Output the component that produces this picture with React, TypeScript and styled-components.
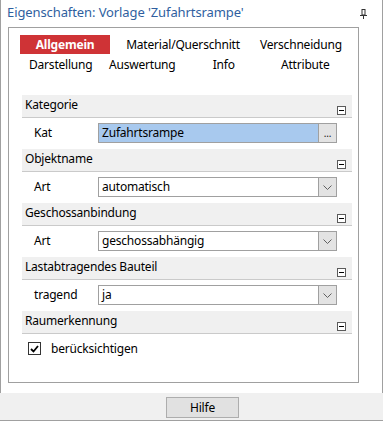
import React from "react";
import styled, { createGlobalStyle } from "styled-components";

const GlobalStyle = createGlobalStyle`
  html, body {
    margin: 0;
    padding: 0;
    background: #ffffff;
  }
  body {
    font-family: "Noto Sans", "Open Sans", sans-serif;
    font-size: 12px;
    letter-spacing: -0.2px;
    color: #000000;
  }
`;

const Window = styled.div`
  width: 383px;
  height: 421px;
  display: flex;
  flex-direction: column;
`;

const Pane = styled.div`
  height: 393px;
  display: flex;
  flex-direction: column;
  border-left: 1px solid #a0a0a0;
  border-right: 1px solid #a0a0a0;
  box-sizing: border-box;
  background: #ffffff;
`;

const TitleBar = styled.div`
  height: 27px;
  display: flex;
  align-items: flex-start;
  justify-content: space-between;
  padding: 3px 15px 0 6px;
  box-sizing: border-box;
`;

const Title = styled.div`
  font-size: 13px;
  letter-spacing: -0.1px;
  line-height: 18px;
  color: #2f5f9f;
  white-space: nowrap;
`;

const Pin = styled.svg`
  margin-top: 6px;
`;

const Panel = styled.div`
  width: 351px;
  height: 356px;
  margin-left: 7px;
  border: 1px solid #a0a0a0;
  box-sizing: border-box;
  padding: 7px 0 0 11px;
`;

const TabRow = styled.div<{ $cols: number; $gap: number }>`
  width: 326px;
  display: grid;
  grid-template-columns: repeat(${(p) => p.$cols}, 1fr);
  column-gap: ${(p) => p.$gap}px;
  height: 19px;
  margin-bottom: 1px;
`;

const Tab = styled.div<{ $active?: boolean }>`
  display: flex;
  align-items: center;
  justify-content: center;
  white-space: nowrap;
  line-height: 19px;
  background: ${(p) => (p.$active ? "#cf3336" : "transparent")};
  color: ${(p) => (p.$active ? "#ffffff" : "#000000")};
  font-weight: ${(p) => (p.$active ? 700 : 400)};
`;

const PropertyGrid = styled.div`
  width: 330px;
  margin: 21px 0 0 2px;
`;

const CategoryHeader = styled.div`
  height: 23px;
  box-sizing: border-box;
  display: flex;
  justify-content: space-between;
  padding: 1px 6px 0 3px;
  background: #f0f0f0;
  border-bottom: 1px solid #cacaca;
`;

const CategoryTitle = styled.span`
  align-self: flex-start;
  line-height: 17px;
`;

const CollapseBox = styled.span`
  align-self: flex-end;
  width: 9px;
  height: 9px;
  margin-bottom: 2px;
  box-sizing: border-box;
  border: 1px solid #5a5a5a;
  background: #ffffff;
  display: flex;
  align-items: center;
  justify-content: center;

  &::after {
    content: "";
    width: 5px;
    height: 1px;
    background: #000000;
  }
`;

const PropRow = styled.div`
  height: 31px;
  box-sizing: border-box;
  padding: 5px 0 0 12px;
  display: flex;
  align-items: flex-start;
`;

const PropLabel = styled.span`
  width: 64px;
  line-height: 20px;
`;

const ValueBox = styled.div<{ $selected?: boolean }>`
  width: 239px;
  height: 20px;
  box-sizing: border-box;
  display: flex;
  border: 1px solid #a0a0a0;
  background: ${(p) => (p.$selected ? "#a8c9ee" : "#ffffff")};
`;

const ValueText = styled.span`
  flex: 1;
  padding-left: 3px;
  line-height: 18px;
  white-space: nowrap;
`;

const ValueButton = styled.span`
  width: 17px;
  border-left: 1px solid #a0a0a0;
  background: #e3e3e3;
  display: flex;
  align-items: center;
  justify-content: center;
  font-size: 10px;
  line-height: 18px;
  color: #202020;
`;

const CheckRow = styled.label`
  display: flex;
  align-items: center;
  gap: 10px;
  padding: 6px 0 0 6px;
`;

const CheckBox = styled.span`
  width: 13px;
  height: 13px;
  box-sizing: border-box;
  border: 1px solid #333333;
  background: #ffffff;
  display: flex;
  align-items: center;
  justify-content: center;
`;

const Footer = styled.div`
  height: 28px;
  box-sizing: border-box;
  background: #f0f0f0;
  border-bottom: 1px solid #a0a0a0;
  padding: 4px 0 0 166px;
`;

const Button = styled.button`
  width: 73px;
  height: 21px;
  box-sizing: border-box;
  border: 1px solid #adadad;
  background: #e1e1e1;
  font-family: inherit;
  font-size: 12px;
  letter-spacing: -0.2px;
  color: #000000;
  padding: 0;
`;

type Category = {
  title: string;
  label?: string;
  value?: string;
  kind: "browse" | "select" | "check";
};

const categories: Category[] = [
  { title: "Kategorie", label: "Kat", value: "Zufahrtsrampe", kind: "browse" },
  { title: "Objektname", label: "Art", value: "automatisch", kind: "select" },
  { title: "Geschossanbindung", label: "Art", value: "geschossabhängig", kind: "select" },
  { title: "Lastabtragendes Bauteil", label: "tragend", value: "ja", kind: "select" },
  { title: "Raumerkennung", value: "berücksichtigen", kind: "check" },
];

const Chevron = () => (
  <svg width="9" height="5" viewBox="0 0 9 5">
    <polyline points="0.5,0.5 4.5,4.5 8.5,0.5" fill="none" stroke="#606060" strokeWidth="1" />
  </svg>
);

const App: React.FC = () => {
  return (
    <Window>
      <GlobalStyle />
      <Pane>
        <TitleBar>
          <Title>Eigenschaften: Vorlage 'Zufahrtsrampe'</Title>
          <Pin width="7" height="10" viewBox="0 0 7 10">
            <rect x="2" y="0.5" width="3" height="5.5" fill="none" stroke="#333" />
            <line x1="0" y1="6.5" x2="7" y2="6.5" stroke="#333" />
            <line x1="3.5" y1="6.5" x2="3.5" y2="10" stroke="#333" />
          </Pin>
        </TitleBar>
        <Panel>
          <TabRow $cols={3} $gap={16}>
            <Tab $active>Allgemein</Tab>
            <Tab>Material/Querschnitt</Tab>
            <Tab>Verschneidung</Tab>
          </TabRow>
          <TabRow $cols={4} $gap={0}>
            <Tab>Darstellung</Tab>
            <Tab>Auswertung</Tab>
            <Tab>Info</Tab>
            <Tab>Attribute</Tab>
          </TabRow>
          <PropertyGrid>
            {categories.map((c) => (
              <React.Fragment key={c.title}>
                <CategoryHeader>
                  <CategoryTitle>{c.title}</CategoryTitle>
                  <CollapseBox />
                </CategoryHeader>
                {c.kind === "check" ? (
                  <CheckRow>
                    <CheckBox>
                      <svg width="9" height="8" viewBox="0 0 9 8">
                        <polyline points="1,4 3.5,6.5 8,1" fill="none" stroke="#000" strokeWidth="1.8" />
                      </svg>
                    </CheckBox>
                    {c.value}
                  </CheckRow>
                ) : (
                  <PropRow>
                    <PropLabel>{c.label}</PropLabel>
                    <ValueBox $selected={c.kind === "browse"}>
                      <ValueText>{c.value}</ValueText>
                      <ValueButton>{c.kind === "browse" ? "..." : <Chevron />}</ValueButton>
                    </ValueBox>
                  </PropRow>
                )}
              </React.Fragment>
            ))}
          </PropertyGrid>
        </Panel>
      </Pane>
      <Footer>
        <Button>Hilfe</Button>
      </Footer>
    </Window>
  );
};

export default App;
